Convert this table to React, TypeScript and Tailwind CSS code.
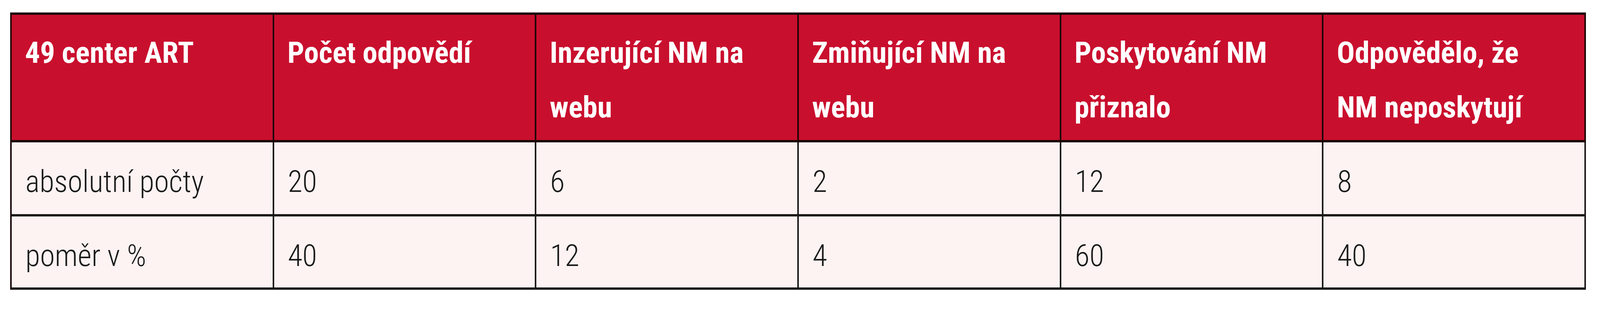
import React from 'react';

const headers = [
  '49 center ART',
  'Počet odpovědí',
  'Inzerující NM na webu',
  'Zmiňující NM na webu',
  'Poskytování NM přiznalo',
  'Odpovědělo, že NM neposkytují',
];

const rows = [
  ['absolutní počty', '20', '6', '2', '12', '8'],
  ['poměr v %', '40', '12', '4', '60', '40'],
];

export default function App() {
  return (
    <div className="w-full h-[800px] bg-white pt-[32px] pl-[26px] pr-[36px] font-['Roboto_Condensed','Liberation_Sans',sans-serif]">
      <div className="grid grid-cols-6 w-full border-l-[4px] border-t-[6px] border-[#1c0606]">
        {headers.map((h) => (
          <div
            key={h}
            className="h-[327px] bg-[#c90f2e] border-r-[4px] border-b-[6px] border-[#1c0606] pl-[34px] pr-[88px] pt-[27px] text-white font-bold text-[76px] leading-[140px]"
          >
            {h}
          </div>
        ))}
        {rows.map((row, i) =>
          row.map((cell, j) => (
            <div
              key={`${i}-${j}`}
              className={`${i === 0 ? 'h-[190px]' : 'h-[188px]'} bg-[#fcf3f2] border-r-[4px] border-b-[6px] border-[#1c1a19] pl-[35px] pt-[51px] text-[#1a1a1a] font-light text-[77px] leading-[100px]`}
            >
              {cell}
            </div>
          ))
        )}
      </div>
    </div>
  );
}
